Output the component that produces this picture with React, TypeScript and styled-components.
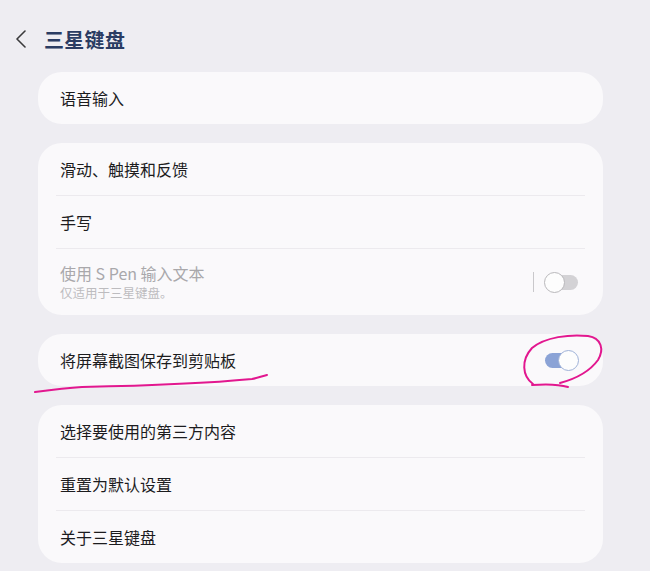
import React from 'react';
import styled, { createGlobalStyle } from 'styled-components';

const GlobalStyle = createGlobalStyle`
  html, body {
    margin: 0;
    padding: 0;
    background: #eeedf2;
  }
  body {
    font-family: "Noto Sans CJK SC", "Noto Sans", sans-serif;
    color: #1c1c1e;
  }
`;

const Page = styled.div`
  position: relative;
  width: 650px;
  height: 571px;
  overflow: hidden;
  background: #eeedf2;
`;

const Header = styled.div`
  display: flex;
  align-items: center;
  height: 32px;
  padding: 23px 0 0 12px;
  gap: 14px;
`;

const BackButton = styled.button`
  display: flex;
  align-items: center;
  justify-content: center;
  width: 18px;
  height: 24px;
  padding: 0;
  border: none;
  background: none;
  color: #3a3a3c;
`;

const Title = styled.h1`
  margin: 0;
  font-size: 20px;
  font-weight: 700;
  color: #2a3c63;
  letter-spacing: 0.3px;
`;

const List = styled.div`
  display: flex;
  flex-direction: column;
  gap: 19px;
  padding: 17px 47px 0 38px;
`;

const Card = styled.div`
  display: flex;
  flex-direction: column;
  background: #faf9fb;
  border-radius: 24px;
  padding: 0 18px;
`;

const Row = styled.div<{ $tall?: boolean }>`
  display: flex;
  align-items: center;
  justify-content: space-between;
  min-height: ${p => (p.$tall ? '66px' : '52px')};
  padding: 0 6px 0 4px;
  & + & {
    border-top: 1px solid #eceaee;
  }
`;

const Texts = styled.div`
  display: flex;
  flex-direction: column;
`;

const Label = styled.span<{ $disabled?: boolean }>`
  font-size: 16px;
  line-height: 19px;
  color: ${p => (p.$disabled ? '#a9a8ab' : '#1c1c1e')};
`;

const Sub = styled.span`
  margin-top: 2px;
  font-size: 12.5px;
  line-height: 16px;
  color: #bdbcbf;
`;

const Controls = styled.div`
  display: flex;
  align-items: center;
  gap: 10px;
`;

const Separator = styled.span`
  width: 1px;
  height: 20px;
  background: #c9c8cb;
`;

const Toggle = styled.span<{ $on?: boolean }>`
  position: relative;
  display: inline-block;
  width: 35px;
  height: 21px;

  &::before {
    content: "";
    position: absolute;
    left: 1px;
    right: 1px;
    top: 3px;
    bottom: 3px;
    border-radius: 8px;
    background: ${p => (p.$on ? '#8ba3d6' : '#d3d2d5')};
  }

  &::after {
    content: "";
    position: absolute;
    top: 0;
    ${p => (p.$on ? 'right: 0;' : 'left: 0;')}
    width: 19px;
    height: 19px;
    border-radius: 50%;
    background: #fdfdfd;
    border: 1px solid ${p => (p.$on ? '#9fb2d8' : '#b9b8bb')};
  }
`;

const Annotation = styled.svg`
  position: absolute;
  left: 0;
  top: 0;
  pointer-events: none;
`;

export default function App() {
  return (
    <Page>
      <GlobalStyle />
      <Header>
        <BackButton aria-label="返回">
          <svg width="12" height="18" viewBox="0 0 12 18">
            <path d="M10 1 L2 9 L10 17" fill="none" stroke="currentColor" strokeWidth="1.6" strokeLinejoin="round" strokeLinecap="round" />
          </svg>
        </BackButton>
        <Title>三星键盘</Title>
      </Header>
      <List>
        <Card>
          <Row>
            <Label>语音输入</Label>
          </Row>
        </Card>
        <Card>
          <Row>
            <Label>滑动、触摸和反馈</Label>
          </Row>
          <Row>
            <Label>手写</Label>
          </Row>
          <Row $tall>
            <Texts>
              <Label $disabled>使用 S Pen 输入文本</Label>
              <Sub>仅适用于三星键盘。</Sub>
            </Texts>
            <Controls>
              <Separator />
              <Toggle />
            </Controls>
          </Row>
        </Card>
        <Card>
          <Row>
            <Label>将屏幕截图保存到剪贴板</Label>
            <Toggle $on />
          </Row>
        </Card>
        <Card>
          <Row>
            <Label>选择要使用的第三方内容</Label>
          </Row>
          <Row>
            <Label>重置为默认设置</Label>
          </Row>
          <Row>
            <Label>关于三星键盘</Label>
          </Row>
        </Card>
      </List>
      <Annotation width="650" height="571" viewBox="0 0 650 571">
        <path
          d="M533 384 C522 376 521 360 532 348 C545 337 570 334 588 336 C602 338 604 350 598 360 C590 371 575 379 560 383"
          fill="none" stroke="#e2178f" strokeWidth="2" strokeLinecap="round"
        />
        <path
          d="M532 385 C545 384 558 384 568 387"
          fill="none" stroke="#e2178f" strokeWidth="2" strokeLinecap="round"
        />
        <path
          d="M35 392 C50 390 65 388 82 387 C130 386 200 384 252 379 C258 378 262 376 267 375"
          fill="none" stroke="#e2178f" strokeWidth="2" strokeLinecap="round"
        />
      </Annotation>
    </Page>
  );
}
